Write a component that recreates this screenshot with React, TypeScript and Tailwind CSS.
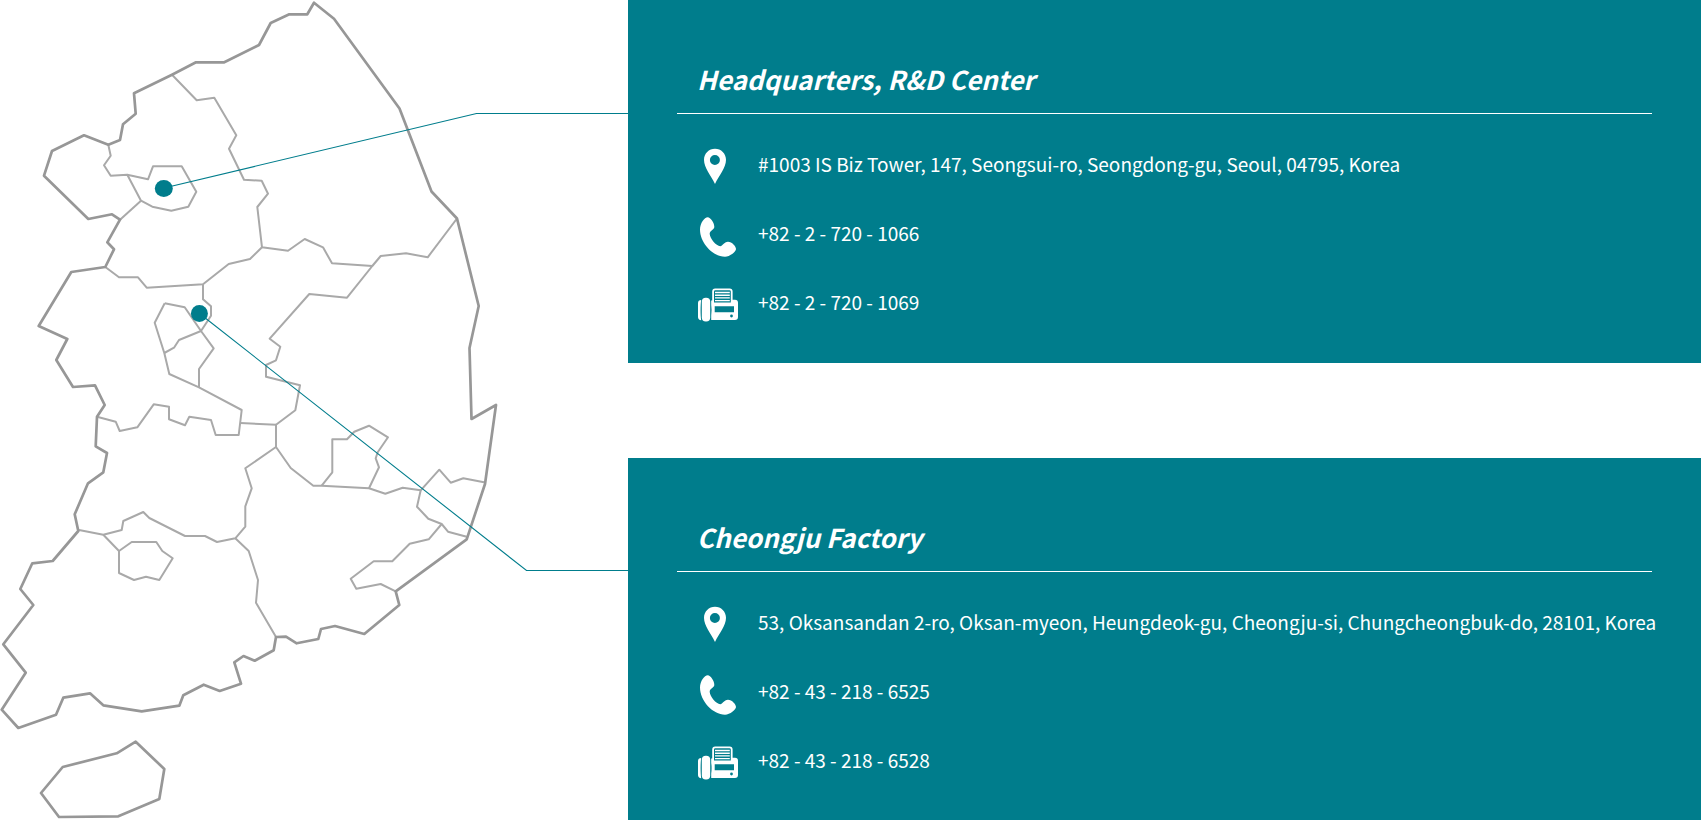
import type { ReactNode } from 'react';

type Site = {
  name: string;
  address: string;
  phone: string;
  fax: string;
};

const sites: Site[] = [
  {
    name: 'Headquarters, R&D Center',
    address: '#1003 IS Biz Tower, 147, Seongsui-ro, Seongdong-gu, Seoul, 04795, Korea',
    phone: '+82 - 2 - 720 - 1066',
    fax: '+82 - 2 - 720 - 1069',
  },
  {
    name: 'Cheongju Factory',
    address: '53, Oksansandan 2-ro, Oksan-myeon, Heungdeok-gu, Cheongju-si, Chungcheongbuk-do, 28101, Korea',
    phone: '+82 - 43 - 218 - 6525',
    fax: '+82 - 43 - 218 - 6528',
  },
];

const coast = [
  '314,2.7 334,18.7 399.5,108.5 431.5,191.5 457,218.5 478.7,306 469.5,348 471.5,419 496,405 485,484 466.7,539.3 395.7,591.3 399.3,605 364.3,634 335,626 321,629 318.3,639 296.7,643.3 286,636.7 276,637 273.7,650.3 254.7,660.7 243.5,656 234.3,662.3 241,683.7 219.7,691 203.7,684.7 183.3,695.3 179.3,705.7 141.7,711.3 103.3,705.3 90,693.3 63.3,697.7 56,714.7 18.3,728 1.7,709.7 25.7,672.7 3.3,644.3 33.3,605 20.3,589 32.3,563.3 52.7,561 78.3,531 74.7,514.3 88,483.3 103.3,472.3 107,453 95.7,446.3 97,416.7 104.7,405 95,385.3 73,387 56.3,360 67.3,339 38.7,326 71.3,272 105.3,267 114,249.3 107.3,242.3 120,219.7 112,214.3 88.3,219 44,175.7 52,151 84,135.3 108.3,144.7 120,140 123,124.3 135.7,113.7 134,93.3 172,74.7 196,62.3 224.3,62.3 259,45 270.7,23 289.3,14.3 307.3,14.3',
  '135.7,741.7 164.3,769 159.3,799 118.3,816.3 59,817 41,793 62.7,767 116.7,753.3',
];

const borders = [
  '172,74.7 196.7,100.3 214.3,97.7 236.3,135.3 229,148.7 244,179.7 261.7,180.7 268,193.7 257.3,207 262,247.3 288,250.7 304.7,239 323,247.3 332,263.3 372.3,266',
  '457,218.5 427.7,257.3 406,253.3 380.7,256 372.3,266 347,297.7 309.3,294 269.7,338.7 280.3,346.7 276,360.3 266,365 266,376.7 300,385.3 295.3,410.3 276,424.7 276,447 290.7,468 313.3,485.7 321.7,485.7 369,488.3 385.3,493.7 402.7,487.7 420.7,490.3 439.3,469.7 450.7,482.7 463.3,478.3 484,482.3',
  '420.7,490.3 417,506.7 428.3,518.7 441.7,524 448,531.7 466.7,536.7',
  '441.7,524 428.7,539.3 409.7,543.7 392.3,561.3 373.7,561.3 350.7,578.7 356.3,588.7 380.7,584 395.7,591.3',
  '321.7,485.7 332.3,472.3 332.3,439.3 347,439.3 354.3,431.7 369,425.7 388,437.3 377.7,452.3 375.7,458.3 379,467.3 369,488.3',
  '262,247.3 250,259 228.7,264 203,284.3 146.7,287.7 138,277.3 119,277.3 105.3,267',
  '203,284.3 203,299.3 211,306.3 211,315.7 201,331 179,340 174,347.7 164.3,353',
  '164.7,303.3 184.7,307.3 201,331 213.7,348.3 199,369 199,387.3',
  '164.7,303.3 154.7,322.7 164.3,353 169.3,374 199,387.3 241.7,410 238.7,435 215.7,435 211,420 189.3,416.7 185,425.3 169,419.3 169,406.7 153.7,404.3 137.3,427.3 119.7,431 115.7,421.7 97,416.7',
  '240.3,423 276,424.7',
  '276,447 245.3,468.3 251.7,488.3 245.3,506.3 245.3,526.7 235.3,538.3 217,542 205,536 185,536 149.3,518 143.3,512 123.3,521 121.7,530 103.3,534.7 79,530',
  '235.3,538.3 248.7,551 258,580 256,602.7 276,637',
  '103.3,534.7 119,551 131.7,542 156.3,542 162.3,551 172.7,558.3 159.3,580 146,576.7 134,580 119,573 119,551',
  '108.3,144.7 110.7,155.7 104,165.3 110.7,175.7 127.3,174.7 148,179.3 153,166.3 181.7,166.3 196.3,191.7 188.3,206.7 171.3,210.7 152.3,206.7 141,200.7 127.3,174.7',
  '141,200.7 120,219.7',
];

function KoreaMap() {
  return (
    <svg viewBox="0 0 628 820" className="block w-[628px] shrink-0" fill="none" role="img" aria-label="Map of Korea">
      <g stroke="#a9a9a9" strokeWidth="2" strokeLinejoin="round">
        {borders.map((points) => (
          <polyline key={points} points={points} />
        ))}
      </g>
      <g stroke="#979797" strokeWidth="2.7" strokeLinejoin="round">
        {coast.map((points) => (
          <polygon key={points} points={points} />
        ))}
      </g>
      <g stroke="#007d8c" strokeWidth="1.1">
        <polyline points="164,188 476.5,113.5 628,113.5" />
        <polyline points="199.5,313.5 526.5,570.5 628,570.5" />
      </g>
      <g fill="#007d8c">
        <ellipse cx="163.8" cy="188.4" rx="9" ry="8.5" />
        <circle cx="199.4" cy="313.4" r="8.5" />
      </g>
    </svg>
  );
}

function PinIcon() {
  return (
    <svg viewBox="0 0 40 48" className="h-12 w-10 shrink-0" fill="#fff" aria-hidden="true">
      <path
        fillRule="evenodd"
        d="M17 7.7C10.9 7.7 6 12.4 6 18.8C6 26.5 13 35 17 42.9C21 35 28 26.5 28 18.8C28 12.4 23.1 7.7 17 7.7ZM16.9 14a5 5 0 1 1 0 10a5 5 0 0 1 0-10Z"
      />
    </svg>
  );
}

function PhoneIcon() {
  return (
    <svg viewBox="0 0 40 48" className="h-12 w-10 shrink-0" fill="#fff" aria-hidden="true">
      <path d="M9.7 7.2C12.5 7.2 16.5 13 16.3 17C16.2 20 11.5 20.5 11.7 24C12 28.5 18 36 22.3 36.2C24.5 36 26 32 30 31.8C34 31.8 38 36.5 38 39C38 41.5 32 46.7 27 46.7C15 46.7 2 33 2 19.5C2 13 6.5 7.2 9.7 7.2Z" />
    </svg>
  );
}

function FaxIcon() {
  return (
    <svg viewBox="0 0 40 48" className="h-12 w-10 shrink-0" fill="#fff" aria-hidden="true">
      <path d="M3.2 21C1.2 21 0 22.2 0 24V38C0 40 1.2 41.2 3.2 41.2C2.4 36 2.4 26 3.2 21Z" />
      <rect x="3.8" y="18.8" width="8.4" height="23.6" rx="4" />
      <path
        fillRule="evenodd"
        d="M13.2 21.5H14.2V12.5a3 3 0 0 1 3-3H31.6a3 3 0 0 1 3 3V20.7H37a3 3 0 0 1 3 3V38a3 3 0 0 1-3 3H13.2V36.5Q14 31 13.2 26ZM16 12.6V23.4H32.8V12.6a1.3 1.3 0 0 0-1.3-1.3H17.3a1.3 1.3 0 0 0-1.3 1.3ZM16.7 27.3V33.3H36V27.3ZM33.5 35.6a1.4 1.4 0 1 0 0 2.8a1.4 1.4 0 0 0 0-2.8Z"
      />
      <path d="M17 12.8h14.8v1.4H17zM17 15.5h14.8v1.4H17zM17 18.2h14.8v1.4H17zM17 20.9h14.8v1.4H17z" />
    </svg>
  );
}

function Row({ icon, children }: { icon: ReactNode; children: ReactNode }) {
  return (
    <li className="flex items-center gap-5">
      {icon}
      <span className="pb-[3px]">{children}</span>
    </li>
  );
}

function SiteCard({ site }: { site: Site }) {
  return (
    <section className="bg-[#007d8c] px-[49px] pt-[59px] pb-9 text-white">
      <h2 className="border-b border-white pb-[14px] pl-5 text-[26px] leading-10 font-bold italic">{site.name}</h2>
      <ul className="flex flex-col gap-[21px] pt-[27px] pl-[21px] text-[19px] leading-8 whitespace-nowrap">
        <Row icon={<PinIcon />}>{site.address}</Row>
        <Row icon={<PhoneIcon />}>{site.phone}</Row>
        <Row icon={<FaxIcon />}>{site.fax}</Row>
      </ul>
    </section>
  );
}

export default function App() {
  return (
    <main className="flex items-start bg-white font-['Noto_Sans_CJK_KR',sans-serif]">
      <KoreaMap />
      <div className="flex min-w-0 flex-1 flex-col gap-[95px]">
        {sites.map((site) => (
          <SiteCard key={site.name} site={site} />
        ))}
      </div>
    </main>
  );
}
